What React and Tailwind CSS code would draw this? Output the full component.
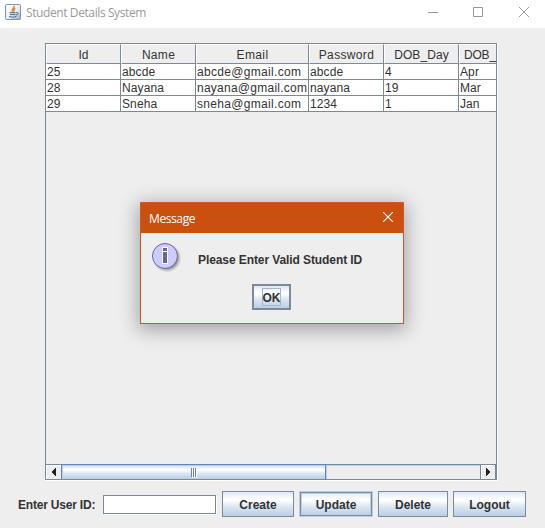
import React from "react";

const rows = [
  ["25", "abcde", "abcde@gmail.com", "abcde", "4", "Apr"],
  ["28", "Nayana", "nayana@gmail.com", "nayana", "19", "Mar"],
  ["29", "Sneha", "sneha@gmail.com", "1234", "1", "Jan"],
];
const headers = ["Id", "Name", "Email", "Password", "DOB_Day", "DOB_"];
const grid = "grid grid-cols-[75px_75px_113px_75px_75px_37px]";
const metal =
  "bg-[linear-gradient(to_bottom,#dde8f3_0%,#ffffff_30%,#ffffff_34%,#dce7f2_60%,#b8cfe5_100%)]";

function JavaIcon() {
  return (
    <svg className="ml-[5px] block" width="16" height="16" viewBox="0 0 16 16">
      <defs>
        <linearGradient id="javaBg" x1="0" y1="0" x2="1" y2="1">
          <stop offset="0" stopColor="#ffffff" />
          <stop offset="0.6" stopColor="#e8edf2" />
          <stop offset="1" stopColor="#8ea6bc" />
        </linearGradient>
      </defs>
      <rect x="0.5" y="0.5" width="15" height="15" rx="1" fill="url(#javaBg)" stroke="#7c93a8" />
      <path d="M9.4 1.8C9.6 4 6 4.6 7.6 7.6M10.4 4.4C8.4 5.3 8.3 6 8.9 7.8" fill="none" stroke="#e8872c" strokeWidth="1.4" />
      <path d="M4.5 8.7h6M5 10.6h5.5M4 12.5c2.4.9 5.2.8 7.4-.1" fill="none" stroke="#38608a" strokeWidth="1" />
      <path d="M11 8.6c3-.4 2.4 2 0 2.4" fill="none" stroke="#38608a" />
    </svg>
  );
}

function InfoIcon() {
  return (
    <svg className="ml-[10px] mt-[8px] block shrink-0" width="32" height="32" viewBox="0 0 32 32">
      <defs>
        <radialGradient id="infoShadow">
          <stop offset="0.72" stopColor="#777" stopOpacity="0.75" />
          <stop offset="1" stopColor="#999" stopOpacity="0" />
        </radialGradient>
      </defs>
      <circle cx="16" cy="17" r="14.5" fill="url(#infoShadow)" />
      <circle cx="14" cy="15" r="12.5" fill="#ccccff" stroke="#666699" />
      <path d="M11 6h6v17h-6z" fill="#ffffff" />
      <path d="M12 7h4v3h-4zM12 11h4v11h-4z" fill="#666699" />
    </svg>
  );
}

function Arrow({ right }) {
  return (
    <svg className="mb-px block" width="4" height="8" viewBox="0 0 4 8" shapeRendering="crispEdges">
      <path d={right ? "M0 0h1v1h1v1h1v1h1v2h-1v1h-1v1h-1v1h-1z" : "M4 0h-1v1h-1v1h-1v1h-1v2h1v1h1v1h1v1h1z"} fill="#222222" />
    </svg>
  );
}

function Button({ label, className, focused }) {
  return (
    <button
      className={`flex h-[26px] items-center justify-center border pt-px text-xs leading-[14px] font-bold ${
        focused ? "border-[#b8cfe5]" : "border-[#7a8a99]"
      } ${metal} ${className}`}
    >
      {label}
    </button>
  );
}

function TitleBar() {
  return (
    <header className="flex h-7 items-start bg-white text-[#999999]">
      <div className="flex h-6 items-center">
        <JavaIcon />
        <h1 className="ml-[5px] whitespace-nowrap pt-[2px] font-['Open_Sans',sans-serif] text-xs leading-4 tracking-[-0.4px]">
          Student Details System
        </h1>
      </div>
      <svg className="ml-auto mr-[15px] mt-[7px] block" width="103" height="10" viewBox="0 0 103 10" fill="none" stroke="#999999">
        <path d="M1 5.5h10M46.5.5h9v9h-9z" />
        <path d="M92 0l10 10M102 0L92 10" />
      </svg>
    </header>
  );
}

function Table() {
  return (
    <div className="ml-[45px] mt-[15px] flex h-[438px] w-[453px] flex-col border-b border-r border-white">
      <div className="flex min-h-0 flex-1 flex-col border border-[#7a8a99]">
        <div className={`${grid} h-5 shrink-0`}>
          {headers.map((h, i) => (
            <div
              key={h}
              className={`whitespace-nowrap border-b border-l border-t border-b-[#7a8a99] border-l-white border-r-[#7a8a99] border-t-white pt-[3px] text-xs leading-[14px] ${
                i === 5 ? "pl-1 tracking-[-0.2px]" : "border-r text-center"
              } ${i === 3 ? "tracking-[0.35px]" : i === 4 ? "tracking-[0.1px]" : i === 2 ? "tracking-[0.4px]" : i === 1 ? "tracking-[0.3px]" : ""}`}
            >
              {h}
            </div>
          ))}
        </div>
        {rows.map((r) => (
          <div key={r[0]} className={`${grid} h-4 shrink-0`}>
            {r.map((c, i) => (
              <div
                key={i}
                className={`whitespace-nowrap border-b border-[#7a8a99] bg-white pl-px pt-px text-xs leading-[14px] ${
                  i === 5 ? "" : "border-r"
                } ${i === 2 ? (c[0] === "n" ? "tracking-[0.25px]" : "tracking-[0.32px]") : i === 0 ? "tracking-[0.2px]" : "tracking-[0.1px]"}`}
              >
                {c}
              </div>
            ))}
          </div>
        ))}
        <div className="mt-auto flex h-[15px] shrink-0 border-t border-[#7a8a99]">
          <div className="flex w-[15px] items-center justify-center border-l border-t border-white pr-px">
            <Arrow />
          </div>
          <div className="-mt-px flex w-[265px] items-center justify-center gap-px border-x border-t border-[#6382bf] bg-[linear-gradient(to_bottom,#cfdff0_0%,#ffffff_35%,#dce7f2_60%,#b8cfe5_100%)] shadow-[inset_1px_1px_0_#b8cfe5]">
            {[0, 1, 2].map((n) => (
              <span key={n} className="h-[9px] w-px bg-[#6382bf] shadow-[1px_1px_0_#ffffff]" />
            ))}
          </div>
          <div className="flex-1 border-l border-t border-[#b8cfe5]" />
          <div className="flex w-[16px] items-center justify-center border-l border-r border-[#7a8a99] shadow-[inset_1px_1px_0_#ffffff]">
            <Arrow right />
          </div>
        </div>
      </div>
    </div>
  );
}

function MessageDialog() {
  return (
    <div
      role="dialog"
      className="absolute left-[140px] top-[202px] h-[122px] w-[264px] border border-[#ce5b25] bg-[#eeeeee] shadow-[0_4px_18px_2px_rgba(0,0,0,0.32)]"
    >
      <div className="flex h-[30px] items-center bg-[#ca5010] pl-2 pr-[10px] text-white">
        <span className="pt-px font-['Open_Sans',sans-serif] text-xs leading-4 tracking-[-0.4px]">Message</span>
        <svg className="ml-auto mb-[2px] block" width="10" height="10" viewBox="0 0 10 10" fill="none" stroke="#ffffff" strokeWidth="1.1">
          <path d="M0 0l10 10M10 0L0 10" />
        </svg>
      </div>
      <div className="flex h-[51px]">
        <InfoIcon />
        <p className="ml-[15px] mt-5 whitespace-nowrap text-xs leading-[14px] font-bold tracking-[-0.09px]">Please Enter Valid Student ID</p>
      </div>
      <button className={`ml-[111px] flex h-[26px] w-[39px] items-center justify-center border-2 border-[#7a8a99] text-xs leading-[14px] font-bold ${metal}`}>
        <span className="flex h-[18px] w-[19px] items-center justify-center border border-[#a3b8cc] pt-px">OK</span>
      </button>
    </div>
  );
}

export default function App() {
  return (
    <div className="relative h-[528px] w-[545px] overflow-hidden bg-[#eeeeee] font-['Liberation_Sans',Arial,sans-serif] text-[#333333]">
      <TitleBar />
      <Table />
      <form className="mt-[10px] flex h-[26px] items-center pl-[18px]" onSubmit={(e) => e.preventDefault()}>
        <label htmlFor="uid" className="w-[85px] whitespace-nowrap pt-px text-xs leading-[14px] font-bold tracking-[-0.2px]">
          Enter User ID:
        </label>
        <input id="uid" className="h-[19px] w-[113px] border border-[#7a8a99] bg-white shadow-[1px_1px_0_#ffffff] outline-none" />
        <Button label="Create" className="ml-[6px] w-[72px]" />
        <Button label="Update" className="ml-[5px] w-[74px] shadow-[inset_0_0_0_1px_#7a8a99,inset_0_0_0_2px_#b8cfe5]" focused />
        <Button label="Delete" className="ml-[5px] w-[70px]" />
        <Button label="Logout" className="ml-[5px] w-[73px]" />
      </form>
      <MessageDialog />
    </div>
  );
}
